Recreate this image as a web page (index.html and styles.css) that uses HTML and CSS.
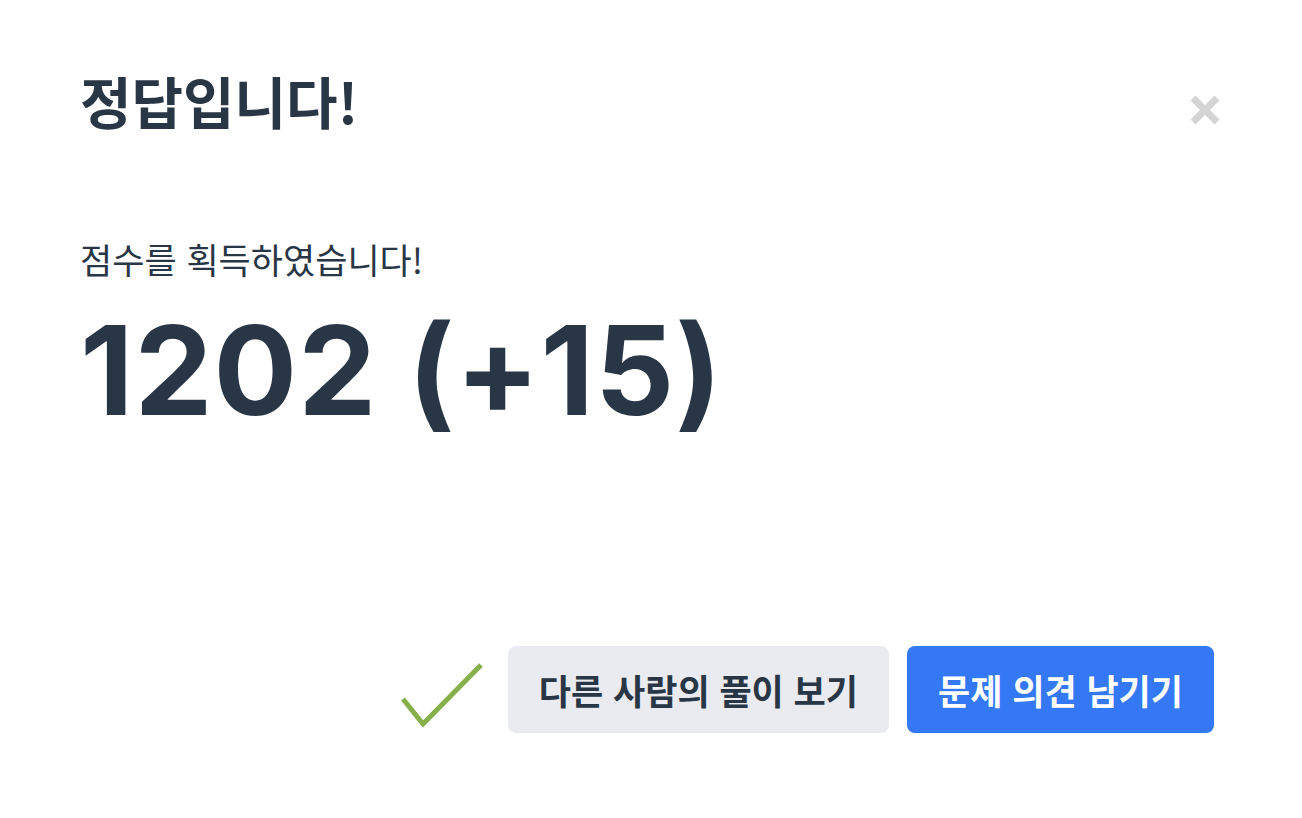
FILE: index.html
```html
<!DOCTYPE html>
<html lang="ko">
<head>
    <meta charset="UTF-8">
    <meta name="viewport" content="width=device-width, initial-scale=1.0">
    <title>정답입니다!</title>
    <link rel="stylesheet" href="styles.css">
</head>
<body>

    <div class="modal">
        <header class="modal-header">
            <h1>정답입니다!</h1>
            <button class="close-btn" aria-label="닫기">
                <svg width="30" height="30" viewBox="0 0 30 30">
                    <path d="M3 3 L27 27 M27 3 L3 27" stroke="#d4d4d4" stroke-width="7"/>
                </svg>
            </button>
        </header>

        <section class="score">
            <p class="score-label">점수를 획득하였습니다!</p>
            <p class="score-value">1202 (+15)</p>
        </section>

        <footer class="modal-footer">
            <svg class="check" width="82" height="64" viewBox="0 0 82 64">
                <path d="M2 36 L22 61 L80 2" fill="none" stroke="#86b04b" stroke-width="5"/>
            </svg>
            <button class="btn btn-gray">다른 사람의 풀이 보기</button>
            <button class="btn btn-blue">문제 의견 남기기</button>
        </footer>
    </div>

</body>
</html>
```

FILE: styles.css
```css
/* Reset some default styles */
* {
    margin: 0;
    padding: 0;
    box-sizing: border-box;
}

body {
    font-family: 'Noto Sans CJK KR', 'Noto Sans', sans-serif;
    background-color: #fff;
    color: #283646;
}

.modal {
    width: 1302px;
    height: 818px;
    padding: 60px 80px 0 80px;
    display: flex;
    flex-direction: column;
}

.modal-header {
    display: flex;
    justify-content: space-between;
    align-items: flex-start;
}

.modal-header h1 {
    font-size: 56px;
    font-weight: 700;
    line-height: 80px;
}

.close-btn {
    background: none;
    border: none;
    cursor: pointer;
    margin-top: 35px;
    margin-right: 2px;
    display: flex;
}

.score {
    margin-top: 94px;
}

.score-label {
    font-size: 35px;
    font-weight: 400;
    line-height: 50px;
}

.score-value {
    margin-top: 11px;
    font-family: Inter, 'Noto Sans', sans-serif;
    font-size: 124px;
    font-weight: 700;
    line-height: 150px;
    letter-spacing: 1px;
}

.modal-footer {
    margin-top: auto;
    margin-bottom: 85px;
    margin-right: 8px;
    display: flex;
    justify-content: flex-end;
    align-items: center;
    gap: 18px;
}

.check {
    margin-right: 7px;
    margin-top: 10px;
}

.btn {
    height: 87px;
    padding: 0 31px;
    border: none;
    border-radius: 8px;
    font-family: 'Noto Sans CJK KR', sans-serif;
    font-size: 35px;
    font-weight: 700;
    cursor: pointer;
}

.btn-gray {
    background-color: #e9ebf0;
    color: #283646;
}

.btn-blue {
    background-color: #3478f6;
    color: #fff;
}
```
